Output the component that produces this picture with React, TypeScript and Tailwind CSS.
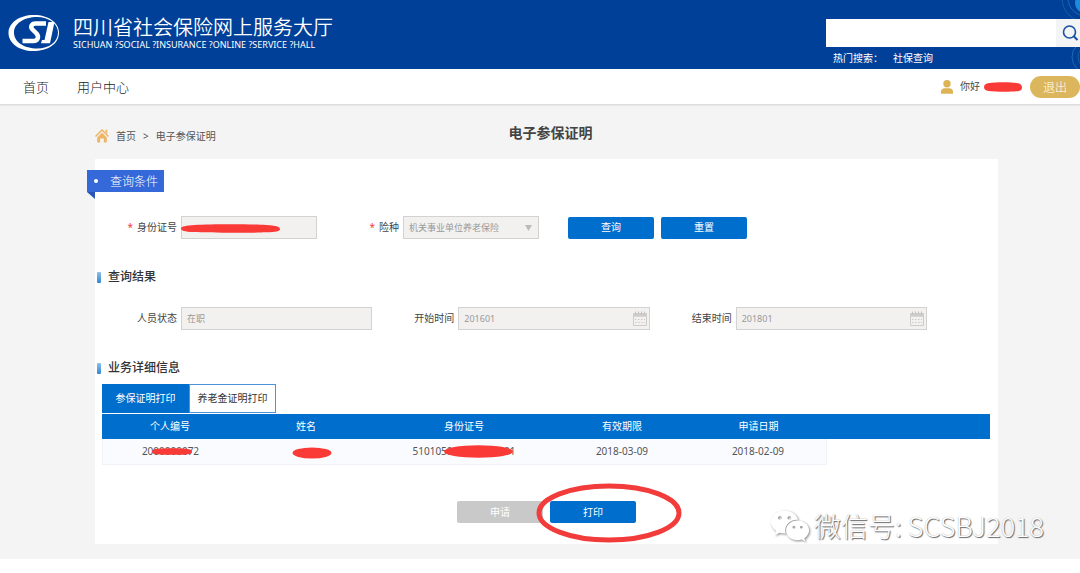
import type { ReactNode } from "react";
import { FaWeixin } from "react-icons/fa";

function Logo() {
  return (
    <svg viewBox="0 0 52 38" className="h-[38px] w-[52px] shrink-0" aria-hidden="true">
      <path
        fill="#fff"
        fillRule="evenodd"
        d="M26 1C11 1 0.5 9 0.5 19S11 37 25 37C40 37 51 30 51 18.500C51 9 41 1 26 1ZM29 3C41 3 50 10 50 18.500C50 28 41 34.500 29.500 34.500C16 34.500 6 28 6 18.500C6 9.500 16 3 29 3Z"
      />
      <path
        fill="none"
        stroke="#fff"
        strokeWidth="4.500"
        d="M38 9.500H27.500C23.500 9.500 22 13 24.500 15.500L28.500 19.500C31.500 23 29.500 27 25.500 27H14.500"
      />
      <path fill="#fff" d="M40.500 8H46.500L42 29.200H33L34 26H36.500Z" />
    </svg>
  );
}

function Scribble({ className }: { className: string }) {
  return (
    <svg viewBox="0 0 100 10" preserveAspectRatio="none" className={`pointer-events-none absolute ${className}`} aria-hidden="true">
      <path
        d="M0 5C0 2.500 5 1.500 14 1C30 0 70 0 86 1C96 1.500 100 3 100 5.500C100 8 96 9 86 9.300C70 10 30 10 12 9C4 8.500 0 7.500 0 5Z"
        fill="#fa3a36"
      />
    </svg>
  );
}

function Calendar() {
  return (
    <svg viewBox="0 0 16 16" className="pointer-events-none absolute right-0.5 top-1 h-4 w-4" fill="none" stroke="#cdcbcb" aria-hidden="true">
      <path d="M1.500 2.500h13v12h-13z" />
      <path d="M1.500 3.500h13M1.500 5h13" stroke="#cfcccc" strokeWidth="1.500" />
      <path d="M3.500 0.500v3M6.500 0.500v3M9.500 0.500v3M12.500 0.500v3" stroke="#c4c2c2" />
      <path d="M3 8.500h10M3 11.500h10" strokeDasharray="1.500 1.500" />
    </svg>
  );
}

function Field({ id, label, required, children }: { id: string; label: string; required?: boolean; children: ReactNode }) {
  return (
    <div className="flex items-center">
      <label htmlFor={id} className="w-[86px] shrink-0 pr-1 text-right text-[10px] text-[#444]">
        {required && <span className="mr-1 text-[#f04040]">*</span>}
        {label}
      </label>
      <div className="relative flex-1">{children}</div>
    </div>
  );
}

const box =
  "block h-[23px] w-full appearance-none rounded-none border border-[#d2d2d2] bg-[#f2f1f0] px-[5px] text-[9px] text-[#999] opacity-100";

function SectionTitle({ children }: { children: ReactNode }) {
  return (
    <h2 className="flex h-5 items-center gap-[7px] pl-0.5 text-xs font-medium text-[#333]">
      <span className="h-[11px] w-1 rounded-[1px] bg-linear-to-b from-[#8cc0ea] to-[#2f86d0]" />
      {children}
    </h2>
  );
}

const action = "block h-[22px] w-[86px] rounded-[2px] text-[10px] text-white";

export default function App() {
  return (
    <div className="relative min-h-screen bg-white font-['Noto_Sans','Noto_Sans_CJK_SC',sans-serif] text-[#444]">
      <header className="relative flex h-[69px] justify-between overflow-hidden bg-[#004098]">
        <svg viewBox="0 0 24 69" className="absolute right-0 top-0 h-[69px] w-6" fill="none" aria-hidden="true">
          <circle cx="30" cy="-2" r="24" stroke="#17609f" />
          <circle cx="30" cy="-2" r="18" stroke="#1a6bb4" />
          <circle cx="29" cy="3" r="10" fill="#1a8be0" />
          <circle cx="32" cy="57" r="16" stroke="#1a6bb4" />
          <circle cx="34" cy="57" r="12" stroke="#17609f" />
        </svg>
        <div className="flex items-start gap-3 pl-2 pt-3.5">
          <Logo />
          <div className="pl-px text-white">
            <div className="font-['Noto_Sans_CJK_SC',sans-serif] text-xl leading-[26px] font-[350]">四川省社会保险网上服务大厅</div>
            <div className="text-[9px] leading-[10px]">SICHUAN ?SOCIAL ?INSURANCE ?ONLINE ?SERVICE ?HALL</div>
          </div>
        </div>
        <div className="relative w-[254px] pt-[19px]">
          <form className="flex h-7" onSubmit={(e) => e.preventDefault()}>
            <input type="search" aria-label="搜索" className="min-w-0 flex-1 bg-white px-2 text-xs text-[#333] outline-none" />
            <button type="submit" aria-label="搜索" className="flex w-6 items-center justify-end bg-[#f2f4f6]">
              <svg viewBox="0 0 18 18" className="h-[18px] w-[18px]" fill="none" stroke="#1b4fa0" aria-hidden="true">
                <circle cx="7.500" cy="8" r="6" strokeWidth="1.600" />
                <path d="M11.500 12l4 4" strokeWidth="2" />
              </svg>
            </button>
          </form>
          <div className="flex gap-2.5 pl-[7px] pt-1 text-[10px] leading-[14px] text-white">
            <span>热门搜索：</span>
            <a href="#social">社保查询</a>
          </div>
        </div>
      </header>

      <nav className="relative flex h-9 items-center justify-between border-b border-[#dcdcdc] bg-white shadow-[0_1px_1px_#e8e8e8]">
        <div className="flex gap-7 pl-[23px] font-['Noto_Sans_CJK_SC',sans-serif] text-[13px] font-light text-[#222]">
          <a href="#home">首页</a>
          <a href="#user">用户中心</a>
        </div>
        <div className="flex items-center text-[10px]">
          <svg viewBox="0 0 14 14" className="mr-1.5 h-3.5 w-3.5" fill="#dcb455" aria-hidden="true">
            <circle cx="7" cy="3.800" r="3.700" />
            <path d="M1 13.800V12C1 9.500 2.500 8.300 4.500 8.300h5C11.500 8.300 13 9.500 13 12v1.800z" />
          </svg>
          <span>你好</span>
          <span className="relative ml-1 mr-2 block h-3.5 w-[38px]">
            <Scribble className="left-0 top-0.5 h-2.5 w-[38px]" />
          </span>
          <button type="button" className="h-[22px] w-[50px] rounded-full bg-[#dcb65c] font-['Noto_Sans_CJK_SC',sans-serif] text-xs font-light text-white">
            退出
          </button>
        </div>
      </nav>

      <main className="bg-[#f4f4f4] pb-[15px] pl-[95px] pr-[82px]">
        <div className="relative flex h-[54px] items-center">
          <div className="flex items-center gap-[7px] pt-2 text-[10px] text-[#555]">
            <svg viewBox="0 0 14 14" className="h-3.5 w-3.5" aria-hidden="true">
              <path d="M0.500 7.500L7 1l6.500 6.500" fill="none" stroke="#edb566" strokeWidth="1.500" />
              <path d="M10.500 0.800h1.800v4l-1.800-1.800z" fill="#edb566" />
              <path d="M7 3.800l4.800 4.700V13.500H8.800V9.500H5.200v4H2.200V8.500z" fill="#edb566" />
            </svg>
            <a href="#home">首页</a>
            <span>&gt;</span>
            <span>电子参保证明</span>
          </div>
          <h1 className="absolute inset-x-0 top-4 pl-2 text-center text-sm leading-6 font-bold text-[#444]">电子参保证明</h1>
        </div>

        <section className="bg-white pb-[21px] pt-[11px]">
          <div className="relative -ml-2 flex h-[22px] w-[77px] items-center bg-[#3568d8] text-xs text-white">
            <span className="ml-[7px] h-1 w-1 rounded-full bg-white" />
            <span className="ml-3 font-['Noto_Sans_CJK_SC',sans-serif] font-light">查询条件</span>
            <span className="absolute left-0 top-full h-[7px] w-2 bg-[#2a55b5] [clip-path:polygon(0_0,100%_0,100%_100%)]" />
          </div>

          <form className="mt-6 flex items-center" onSubmit={(e) => e.preventDefault()}>
            <div className="w-[222px]">
              <Field id="idno" label="身份证号" required>
                <input id="idno" disabled className={box} />
                <Scribble className="left-0 top-2 h-[9px] w-[99px]" />
              </Field>
            </div>
            <div className="w-[222px]">
              <Field id="kind" label="险种" required>
                <select id="kind" disabled className={box}>
                  <option>机关事业单位养老保险</option>
                </select>
                <span className="pointer-events-none absolute right-[7px] top-[9px] h-1.5 w-[7px] bg-[#bbb] [clip-path:polygon(0_0,100%_0,50%_100%)]" />
              </Field>
            </div>
            <div className="ml-[29px] flex gap-[7px]">
              <button type="submit" className={`${action} bg-[#006ecd]`}>查询</button>
              <button type="reset" className={`${action} bg-[#006ecd]`}>重置</button>
            </div>
          </form>

          <div className="mt-7">
            <SectionTitle>查询结果</SectionTitle>
          </div>
          <div className="mt-5 grid grid-cols-3 pr-[71px]">
            <Field id="state" label="人员状态">
              <input id="state" disabled value="在职" className={box} />
            </Field>
            <Field id="start" label="开始时间">
              <input id="start" disabled value="201601" className={box} />
              <Calendar />
            </Field>
            <Field id="end" label="结束时间">
              <input id="end" disabled value="201801" className={box} />
              <Calendar />
            </Field>
          </div>

          <div className="mt-7">
            <SectionTitle>业务详细信息</SectionTitle>
          </div>
          <div className="ml-[7px] mr-2 mt-1.5">
            <div className="flex text-[10px]" role="tablist">
              <button type="button" role="tab" aria-selected="true" className="h-[29px] w-[87px] border border-[#006ecd] bg-[#006ecd] text-white">
                参保证明打印
              </button>
              <button type="button" role="tab" aria-selected="false" className="h-[29px] w-[87px] border border-[#4a94dc] bg-white text-[#333]">
                养老金证明打印
              </button>
            </div>
            <table className="mt-px w-full table-fixed border-separate border-spacing-0 text-center text-[10px]">
              <colgroup>
                <col className="w-[136px]" />
                <col className="w-[136px]" />
                <col className="w-[180px]" />
                <col className="w-[136px]" />
                <col className="w-[137px]" />
                <col />
              </colgroup>
              <thead>
                <tr className="h-[25px] bg-[#006ecd] text-white">
                  <th className="font-normal">个人编号</th>
                  <th className="font-normal">姓名</th>
                  <th className="font-normal">身份证号</th>
                  <th className="font-normal">有效期限</th>
                  <th className="font-normal">申请日期</th>
                  <th />
                </tr>
              </thead>
              <tbody>
                <tr className="h-[26px] text-[#555]">
                  <td className="border-b border-l border-[#f0f2f8] bg-[#fafbfe]">
                    <span className="relative inline-block">
                      2000000072
                      <Scribble className="left-2.5 top-1 h-[7px] w-10" />
                    </span>
                  </td>
                  <td className="border-b border-[#f0f2f8] bg-[#fafbfe]">
                    <span className="relative inline-block h-3.5 w-7 align-middle">
                      <svg viewBox="0 0 40 12" className="absolute left-0 top-0.5 h-3 w-10" aria-hidden="true">
                        <ellipse cx="20" cy="6" rx="19.500" ry="5.500" fill="#fa3a36" />
                      </svg>
                    </span>
                  </td>
                  <td className="border-b border-[#f0f2f8] bg-[#fafbfe]">
                    <span className="relative inline-block">
                      510105000000000001
                      <svg viewBox="0 0 69 13" className="absolute left-[31px] top-px h-[13px] w-[69px]" aria-hidden="true">
                        <ellipse cx="34.500" cy="6.500" rx="34.500" ry="6.300" fill="#fa3a36" />
                      </svg>
                    </span>
                  </td>
                  <td className="border-b border-[#f0f2f8] bg-[#fafbfe]">2018-03-09</td>
                  <td className="border-b border-r border-[#f0f2f8] bg-[#fafbfe]">2018-02-09</td>
                  <td />
                </tr>
              </tbody>
            </table>
          </div>

          <div className="mt-9 flex justify-center gap-[7px]">
            <button type="button" disabled className={`${action} bg-[#c9c9c9]`}>申请</button>
            <div className="relative">
              <button type="button" className={`${action} bg-[#006ecd]`}>打印</button>
              <svg viewBox="0 0 146 60" className="pointer-events-none absolute -left-3.5 -top-[18px] h-[60px] w-[146px] max-w-none" aria-hidden="true">
                <ellipse cx="73" cy="30" rx="70" ry="27" fill="none" stroke="#f23b3b" strokeWidth="5" />
              </svg>
            </div>
          </div>
        </section>
      </main>

      <div className="pointer-events-none absolute right-9 top-[506px] flex items-center gap-1 font-['Noto_Sans_CJK_SC',sans-serif] text-[27px] leading-10 font-light text-white">
        <FaWeixin className="h-10 w-10 drop-shadow-[1px_1px_1px_#888]" />
        <span className="[text-shadow:1px_1px_1px_#666,0_0_1px_#aaa]">微信号: SCSBJ2018</span>
      </div>
    </div>
  );
}
